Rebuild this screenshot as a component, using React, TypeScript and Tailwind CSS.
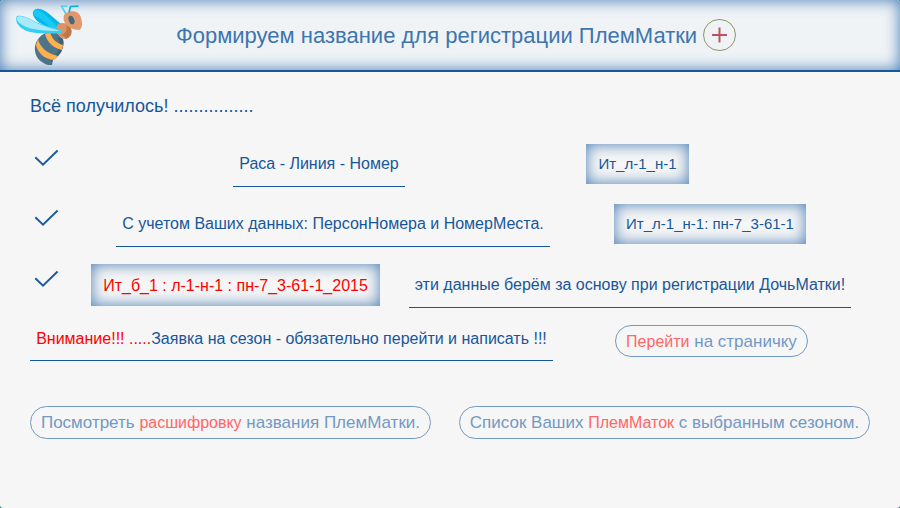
import React from "react";

function Bee() {
  return (
    <svg className="block h-[70px] w-[100px]" viewBox="0 0 100 70">
      <path d="M48 13C40 7 34 8 33 12C32 17 38 26 57 29L61 24Z" fill="#00b8ee" />
      <path d="M35 16C42 19 47 24 51 28L58 28C51 20 44 12 37 10C33 10 33 14 35 16Z" fill="#16caf5" />
      <path d="M46 33C38 36 34 44 35 51C36 59 42 63 48 65L52 65L53 60C60 56 65 48 63 39L57 33Z" fill="#4f7489" />
      <path d="M57 37C61 42 61 51 52 59L50 65L53 60C60 56 65 48 63 39Z" fill="#406176" />
      <path d="M38 39C40 47 46 53 58 56L54 60C44 59 38 53 36 45Z" fill="#ffb04e" />
      <path d="M45 34L50 32C52 39 56 43 63 45L62 50C53 48 47 42 45 34Z" fill="#ffb04e" />
      <path d="M57 25C60 22 67 22 70 27C73 32 71 38 65 39C59 38 55 32 57 25Z" fill="#dc9368" />
      <path d="M66 23C73 26 74 36 66 39C65 36 62 35 60 35C66 35 68 28 66 23Z" fill="#bd7748" />
      <path d="M66 13C73 9 80 12 81 18C83 24 82 29 79 30C74 30 66 27 64 21C63 17 64 14 66 13Z" fill="#e1986d" />
      <ellipse cx="71.5" cy="20" rx="2.8" ry="4.4" transform="rotate(-20 71.5 20)" fill="#49677b" />
      <path d="M66 14L61.5 6.2L67.5 6" fill="none" stroke="#4bd2f2" strokeWidth="1.6" />
      <path d="M69 12.5L70.5 6.5L78.5 6.2" fill="none" stroke="#08aee6" strokeWidth="1.7" />
      <path d="M17 16C22 15 27 17 34 21C43 26 54 27 62 30L62 33C47 34 30 34 23 29C16 25 15 18 17 16Z" fill="#36cdf5" />
      <path d="M17 17C21 15 28 18 35 22C42 26 52 28 60 31C47 31 31 30 24 26C17 22 16 19 17 17Z" fill="#a9eafa" />
    </svg>
  );
}

function Check() {
  return (
    <svg className="block h-[22px] w-[32px] shrink-0" viewBox="0 0 32 22" fill="none" stroke="#1c5c9c" strokeWidth="2">
      <path d="M5.3 10.2L13 17.6L27.6 3.5" />
    </svg>
  );
}

const chip = "flex shrink-0 items-center justify-center whitespace-nowrap shadow-[inset_0_0_15px_#1a5ca3cc]";
const pill = "flex shrink-0 items-center justify-center whitespace-pre rounded-[17px] border border-[#7299c3] text-[17px] text-[#7299c3]";
const line = "flex shrink-0 justify-center whitespace-nowrap border-b border-[#16569a] text-base leading-[20px]";

export default function App() {
  return (
    <div className="bg-[#1c6f80] font-['Liberation_Sans',Arial,sans-serif] text-[#16569a]">
      <div className="h-[508px] w-[900px] overflow-hidden rounded-[3px] bg-[#f6f6f6]">
        <header className="flex h-[72px] border-b-2 border-[#16569a] bg-[#eff3f6] shadow-[inset_0_0_15px_#1a5ca3cc]">
          <Bee />
          <div className="ml-[76px] flex h-[70px] items-center">
            <h1 className="w-[527px] whitespace-nowrap text-[22px] text-[#3d75ae]">Формируем название для регистрации ПлемМатки</h1>
            <svg className="mt-[2px] block size-[34px]" viewBox="0 0 34 34" fill="none">
              <rect x="0.5" y="0.5" width="32" height="31" rx="15.5" stroke="#8e9567" />
              <path d="M9 16H24M16.5 8.5V23.5" stroke="#bd5260" strokeWidth="2" />
            </svg>
          </div>
        </header>
        <main className="px-[30px] pt-[22px]">
          <p className="h-[50px] text-[18px] leading-[24px]">Всё получилось! ................</p>
          <div className="flex h-[60px]">
            <div className="pt-[3px]"><Check /></div>
            <div className={`${line} ml-[171px] h-[43px] w-[172px] pt-[10px]`}>Раса - Линия - Номер</div>
            <div className={`${chip} ml-[181px] h-[40px] w-[103px] text-[15px]`}>Ит_л-1_н-1</div>
          </div>
          <div className="flex h-[60px]">
            <div className="pt-[3px]"><Check /></div>
            <div className={`${line} ml-[54px] h-[43px] w-[434px] pt-[10px]`}>С учетом Ваших данных: ПерсонНомера и НомерМеста.</div>
            <div className={`${chip} ml-[64px] h-[40px] w-[192px] text-[15px]`}>Ит_л-1_н-1: пн-7_3-61-1</div>
          </div>
          <div className="flex h-[61px]">
            <div className="pt-[4px]"><Check /></div>
            <div className={`${chip} ml-[29px] h-[42px] w-[289px] pt-[2px] text-base text-[#ff0000]`}>Ит_б_1 : л-1-н-1 : пн-7_3-61-1_2015</div>
            <div className={`${line} ml-[29px] h-[44px] w-[442px] pt-[11px]`}>эти данные берём за основу при регистрации ДочьМатки!</div>
          </div>
          <div className="flex h-[81px]">
            <div className={`${line} h-[36px] w-[523px] pt-[4px]`}>
              <span className="text-[#ff0000]">Внимание!!! .....</span>Заявка на сезон - обязательно перейти и написать !!!
            </div>
            <button className={`${pill} ml-[62px] h-[32px] w-[193px] pt-[2px]`}><span className="text-base text-[#ff6666]">Перейти</span> на страничку</button>
          </div>
          <div className="flex justify-between">
            <button className={`${pill} h-[33px] w-[401px]`}>Посмотреть <span className="text-base text-[#ff6666]">расшифровку</span> названия ПлемМатки.</button>
            <button className={`${pill} h-[33px] w-[411px]`}>Список Ваших <span className="text-base text-[#ff6666]">ПлемМаток</span> с выбранным сезоном.</button>
          </div>
        </main>
      </div>
    </div>
  );
}
